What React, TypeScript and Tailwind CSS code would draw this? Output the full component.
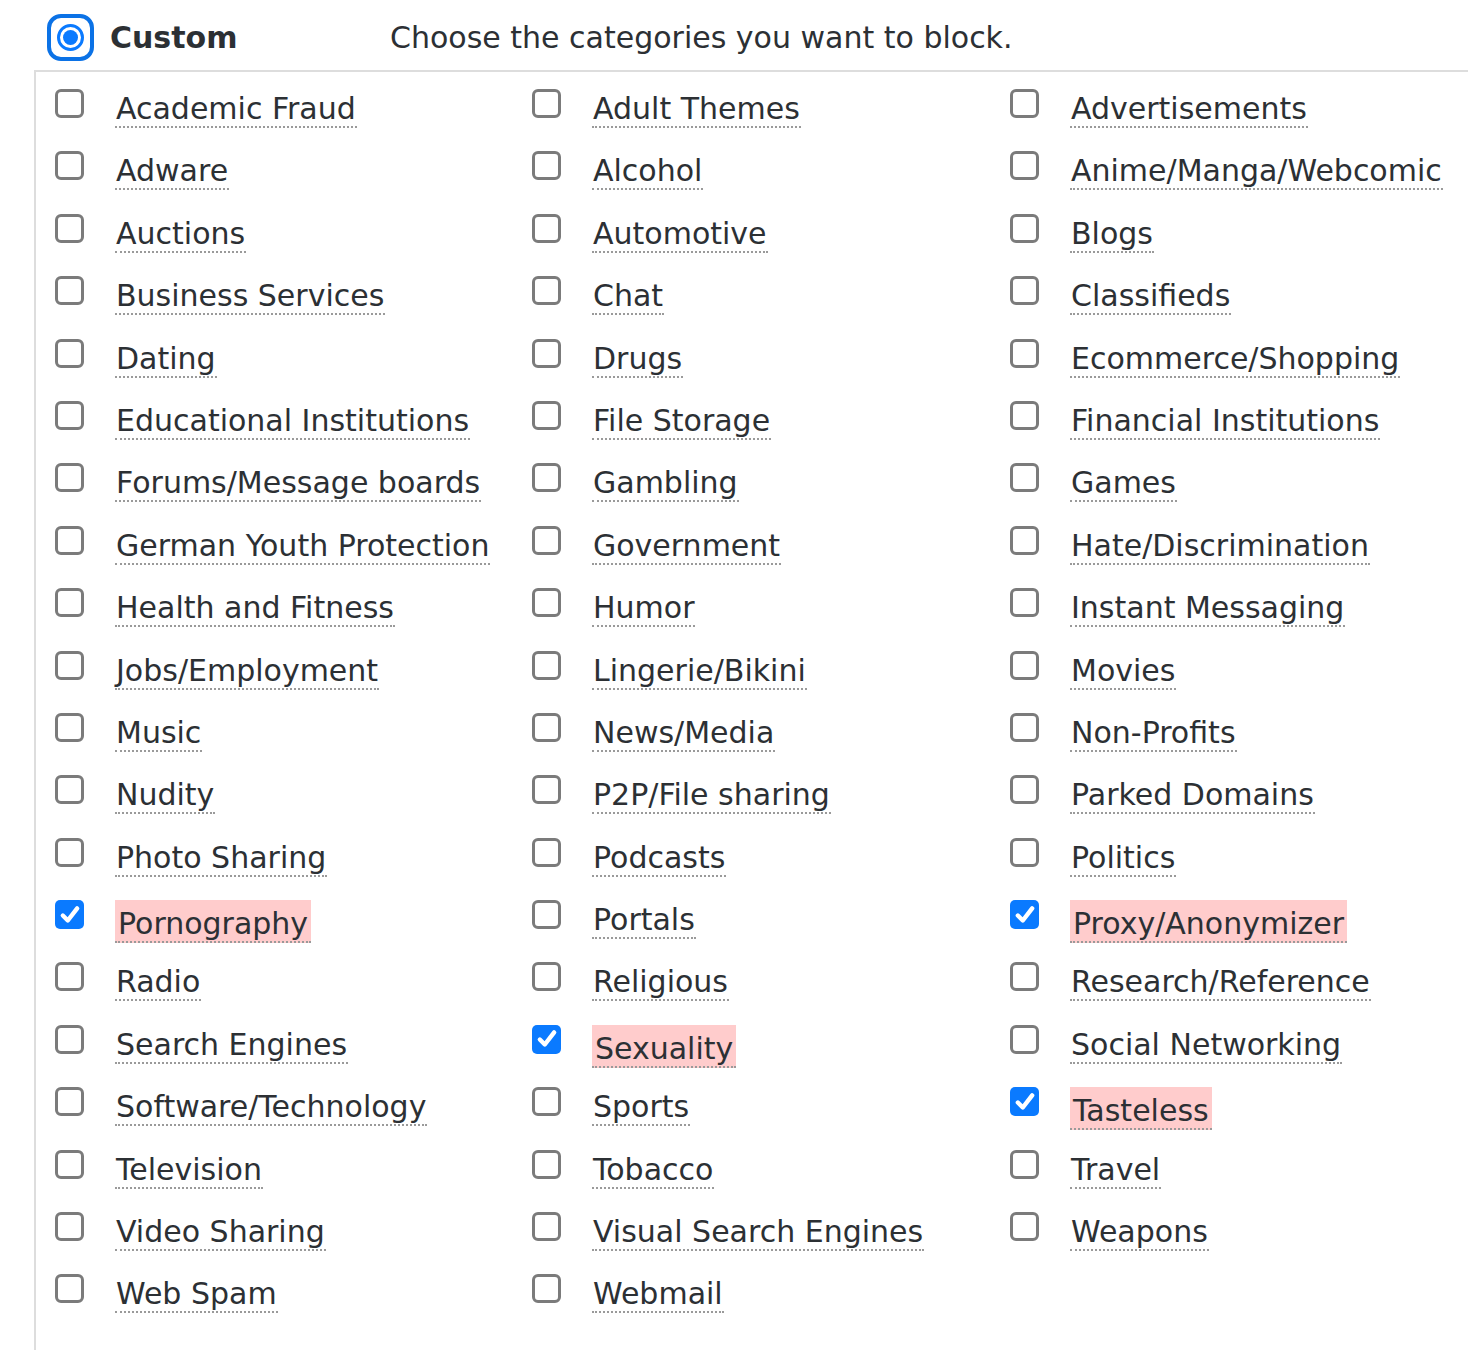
import React from 'react';

const ROWS: [string, boolean][][] = [
  [['Academic Fraud', false], ['Adult Themes', false], ['Advertisements', false]],
  [['Adware', false], ['Alcohol', false], ['Anime/Manga/Webcomic', false]],
  [['Auctions', false], ['Automotive', false], ['Blogs', false]],
  [['Business Services', false], ['Chat', false], ['Classifieds', false]],
  [['Dating', false], ['Drugs', false], ['Ecommerce/Shopping', false]],
  [['Educational Institutions', false], ['File Storage', false], ['Financial Institutions', false]],
  [['Forums/Message boards', false], ['Gambling', false], ['Games', false]],
  [['German Youth Protection', false], ['Government', false], ['Hate/Discrimination', false]],
  [['Health and Fitness', false], ['Humor', false], ['Instant Messaging', false]],
  [['Jobs/Employment', false], ['Lingerie/Bikini', false], ['Movies', false]],
  [['Music', false], ['News/Media', false], ['Non-Profits', false]],
  [['Nudity', false], ['P2P/File sharing', false], ['Parked Domains', false]],
  [['Photo Sharing', false], ['Podcasts', false], ['Politics', false]],
  [['Pornography', true], ['Portals', false], ['Proxy/Anonymizer', true]],
  [['Radio', false], ['Religious', false], ['Research/Reference', false]],
  [['Search Engines', false], ['Sexuality', true], ['Social Networking', false]],
  [['Software/Technology', false], ['Sports', false], ['Tasteless', true]],
  [['Television', false], ['Tobacco', false], ['Travel', false]],
  [['Video Sharing', false], ['Visual Search Engines', false], ['Weapons', false]],
  [['Web Spam', false], ['Webmail', false]],
];

const Checkbox = ({ checked }: { checked: boolean }) =>
  checked ? (
    <div className="w-[29px] h-[29px] shrink-0 rounded-[5px] bg-[#0a7aff] flex items-center justify-center">
      <svg width="22" height="22" viewBox="0 0 20 20">
        <path d="M3.5 10.5 L8 15 L16.5 4" fill="none" stroke="#fff" strokeWidth="4" strokeLinecap="round" strokeLinejoin="round" />
      </svg>
    </div>
  ) : (
    <div className="w-[29px] h-[29px] shrink-0 rounded-[6px] border-[3px] border-[#7b7b7b] bg-white" />
  );

const Item = ({ label, checked }: { label: string; checked: boolean }) => (
  <div className="flex items-start gap-[31px]">
    <Checkbox checked={checked} />
    <span
      className={`inline-block leading-[34px] border-b-2 border-dotted border-[#9a9a9a] whitespace-nowrap ${
        checked ? 'bg-[#ffcccc] pt-[7px] px-[3px]' : 'mt-[3px] pl-[1px] pr-[1px]'
      }`}
    >
      {label}
    </span>
  </div>
);

export default function App() {
  return (
    <div
      className="min-h-[1350px] bg-white text-[#2c3034] text-[30px] flex flex-col"
      style={{ fontFamily: '"DejaVu Sans", Verdana, sans-serif' }}
    >
      {/* Header */}
      <div className="h-[70px] flex items-center pl-[47px] pt-[4px]">
        <div className="w-[47px] h-[47px] shrink-0 rounded-[14px] border-[4px] border-[#0b72e6] flex items-center justify-center">
          <div className="w-[27px] h-[27px] rounded-full border-[3px] border-[#0a7aff] flex items-center justify-center">
            <div className="w-[15px] h-[15px] rounded-full bg-[#0a7aff]" />
          </div>
        </div>
        <span className="w-[296px] pl-[16px] font-bold">Custom</span>
        <span>Choose the categories you want to block.</span>
      </div>

      {/* Category grid */}
      <div className="flex-1 ml-[34px] border-l-2 border-t-2 border-[#dddddd] pl-[19px] pt-[17px]">
        <div className="grid grid-cols-[477px_478px_1fr] auto-rows-[62.4px]">
          {ROWS.flat().map(([label, checked]) => (
            <Item key={label} label={label} checked={checked} />
          ))}
        </div>
      </div>
    </div>
  );
}
